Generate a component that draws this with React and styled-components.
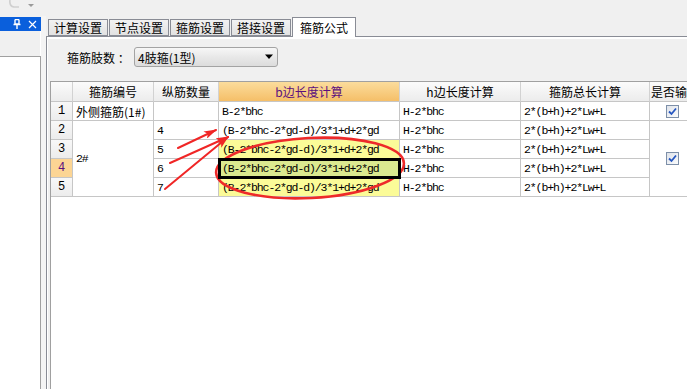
import React from "react"
import styled, { createGlobalStyle } from "styled-components"

const GlobalStyle = createGlobalStyle`
  html, body {
    margin: 0;
    padding: 0;
  }
  body {
    width: 687px;
    height: 389px;
    overflow: hidden;
    background: #f0f0f0;
    font-family: "Noto Sans CJK SC", "Liberation Sans", sans-serif;
    font-size: 12px;
    color: #000;
  }
`

const Screen = styled.div`
  position: relative;
  width: 687px;
  height: 389px;
  display: flex;
  flex-direction: column;
  overflow: hidden;
`

const TopBar = styled.div`
  height: 16px;
  display: flex;
  align-items: flex-start;
  padding-left: 4px;
`

const Body = styled.div`
  flex: 1;
  display: flex;
  min-height: 0;
`

const Dock = styled.div`
  width: 41px;
  display: flex;
  flex-direction: column;
  margin-top: 1px;
`

const DockTitle = styled.div`
  height: 14px;
  background: #0a5fdc;
  display: flex;
  align-items: center;
  justify-content: flex-end;
  gap: 7px;
  padding-right: 4px;
`

const DockTools = styled.div`
  height: 25px;
  border-right: 1px solid #fff;
`

const DockList = styled.div`
  flex: 1;
  background: #fff;
  border-top: 1px solid #a0a0a0;
  border-right: 1px solid #a0a0a0;
  width: 40px;
`

const Splitter = styled.div`
  width: 5px;
  background: #f4f4f4;
`

const Main = styled.div`
  flex: 1;
  display: flex;
  flex-direction: column;
  min-width: 0;
`

const TabStrip = styled.div`
  height: 20px;
  display: flex;
  align-items: flex-end;
  padding-left: 2px;
  border-bottom: 1px solid #898c95;
`

const Tab = styled.div`
  height: ${p => (p.$active ? "20px" : "17px")};
  margin-bottom: ${p => (p.$active ? "-1px" : "0")};
  padding: 0 ${p => (p.$active ? "7px" : "5px")};
  margin-right: ${p => (p.$active ? "0" : "1px")};
  box-sizing: border-box;
  display: flex;
  align-items: center;
  border: 1px solid #898c95;
  border-bottom: ${p => (p.$active ? "none" : "1px solid #898c95")};
  background: ${p => (p.$active ? "#fff" : "linear-gradient(#f2f2f2, #e2e2e2)")};
  line-height: 1;
  white-space: nowrap;
`

const Panel = styled.div`
  flex: 1;
  display: flex;
  flex-direction: column;
  border-left: 1px solid #898c95;
  box-shadow: inset 1px 2px 0 #fff;
  padding: 10px 0 0 3px;
  min-height: 0;
`

const FieldRow = styled.div`
  height: 20px;
  display: flex;
  align-items: center;
  padding-left: 17px;
  margin-bottom: 14px;
`

const Label = styled.span`
  width: 67px;
  white-space: nowrap;
`

const Combo = styled.div`
  width: 144px;
  height: 20px;
  box-sizing: border-box;
  border: 1px solid #a3a3a3;
  border-radius: 3px;
  background: linear-gradient(#f7f7f7, #e8e8e8 50%, #dcdcdc);
  display: flex;
  align-items: center;
  justify-content: space-between;
  padding: 0 3px 0 3px;
`

const GridWrap = styled.div`
  flex: 1;
  background: #fff;
  border-left: 1px solid #a0a0a0;
  border-top: 1px solid #a0a0a0;
  overflow: hidden;
`

const Grid = styled.div`
  display: grid;
  grid-template-columns: 22px 81px 65px 181px 121px 129px 46px;
  grid-template-rows: 20px repeat(5, 19px);
`

const Cell = styled.div`
  box-sizing: border-box;
  border-right: 1px solid #c6c6c6;
  border-bottom: 1px solid #c6c6c6;
  display: flex;
  align-items: center;
  padding-left: 3px;
  white-space: nowrap;
  overflow: visible;
  grid-row: ${p => (p.$span ? `span ${p.$span}` : "auto")};
  background: ${p => (p.$sel ? "#dbe98f" : p.$hl ? "#fbfb98" : "#fff")};
  outline: ${p => (p.$sel ? "3px solid #000" : "none")};
  outline-offset: -2px;
  position: ${p => (p.$sel ? "relative" : "static")};
  z-index: ${p => (p.$sel ? 1 : 0)};
`

const Mono = styled.span`
  font-family: "Liberation Mono", monospace;
  font-size: 11.5px;
  letter-spacing: -1.1px;
`

const HeadCell = styled.div`
  box-sizing: border-box;
  border-right: 1px solid #d2d2d2;
  border-bottom: 1px solid #c6c6c6;
  display: flex;
  align-items: center;
  justify-content: ${p => (p.$left ? "flex-start" : "center")};
  padding-left: ${p => (p.$left ? "1px" : "0")};
  white-space: nowrap;
  background: ${p => (p.$active ? "linear-gradient(#fbdc9c, #f5bf68)" : "linear-gradient(#fbfbfb, #ececec)")};
  color: ${p => (p.$active ? "#5b0f7e" : "#000")};
`

const RowNum = styled.div`
  box-sizing: border-box;
  border-right: 1px solid #c6c6c6;
  border-bottom: 1px solid #c6c6c6;
  display: flex;
  align-items: center;
  justify-content: center;
  font-family: "Liberation Mono", monospace;
  font-size: 12px;
  background: ${p => (p.$active ? "#fcd594" : "linear-gradient(#f8f8f8, #ececec)")};
  color: ${p => (p.$active ? "#5b0f7e" : "#000")};
`

const CheckCell = styled(Cell)`
  justify-content: center;
  padding-left: 0;
`

const Box = styled.div`
  width: 13px;
  height: 13px;
  box-sizing: border-box;
  border: 1px solid #7d8fa8;
  background: linear-gradient(135deg, #dfe3ea, #fafbfc);
  display: flex;
  align-items: center;
  justify-content: center;
`

const Overlay = styled.svg`
  position: absolute;
  left: 0;
  top: 0;
  pointer-events: none;
`

function CheckBox() {
  return (
    <Box>
      <svg width="9" height="9" viewBox="0 0 9 9">
        <path d="M1 4.5 L3.5 7 L8 1.5" stroke="#2556c0" strokeWidth="1.8" fill="none" />
      </svg>
    </Box>
  )
}

const formula = "(B-2*bhc-2*gd-d)/3*1+d+2*gd"
const total = "2*(b+h)+2*Lw+L"
const tabs = ["计算设置", "节点设置", "箍筋设置", "搭接设置", "箍筋公式"]
const heads = ["箍筋编号", "纵筋数量", "b边长度计算", "h边长度计算", "箍筋总长计算"]
const subRows = [
  { n: 2, count: "4" },
  { n: 3, count: "5", hl: true },
  { n: 4, count: "6", hl: true, sel: true },
  { n: 5, count: "7", hl: true },
]

export default function App() {
  return (
    <Screen>
      <GlobalStyle />
      <TopBar>
        <svg width="32" height="12" viewBox="0 0 32 12">
          <path d="M6 0 Q5 6 10 7 L15 7" stroke="#cfcfcf" strokeWidth="1.6" fill="none" />
          <path d="M24 4 L30 4 L27 7 z" fill="#9a9a9a" />
        </svg>
      </TopBar>
      <Body>
        <Dock>
          <DockTitle>
            <svg width="8" height="10" viewBox="0 0 8 10">
              <path d="M2 0.5 H6 M2 0.5 V5 H6 V0.5 M0.5 5.5 H7.5 M4 5.5 V10" stroke="#fff" strokeWidth="1.4" fill="none" />
            </svg>
            <svg width="9" height="9" viewBox="0 0 9 9">
              <path d="M1 1 L8 8 M8 1 L1 8" stroke="#fff" strokeWidth="1.2" />
            </svg>
          </DockTitle>
          <DockTools />
          <DockList />
        </Dock>
        <Splitter />
        <Main>
          <TabStrip>
            {tabs.map((t, i) => (
              <Tab key={t} $active={i === tabs.length - 1}>{t}</Tab>
            ))}
          </TabStrip>
          <Panel>
            <FieldRow>
              <Label>箍筋肢数 ：</Label>
              <Combo>
                <span>4肢箍(1型)</span>
                <svg width="10" height="6" viewBox="0 0 10 6">
                  <path d="M1 0.5 L9 0.5 L5 5 z" fill="#000" />
                </svg>
              </Combo>
            </FieldRow>
            <GridWrap>
              <Grid>
                <HeadCell />
                {heads.map((h, i) => (
                  <HeadCell key={h} $active={i === 2}>{h}</HeadCell>
                ))}
                <HeadCell $left>是否输出</HeadCell>

                <RowNum>1</RowNum>
                <Cell>外侧箍筋(1#)</Cell>
                <Cell />
                <Cell><Mono>B-2*bhc</Mono></Cell>
                <Cell><Mono>H-2*bhc</Mono></Cell>
                <Cell><Mono>{total}</Mono></Cell>
                <CheckCell><CheckBox /></CheckCell>

                {subRows.map((r, i) => (
                  <React.Fragment key={r.n}>
                    <RowNum $active={r.sel}>{r.n}</RowNum>
                    {i === 0 && <Cell $span={4}><Mono>2#</Mono></Cell>}
                    <Cell><Mono>{r.count}</Mono></Cell>
                    <Cell $hl={r.hl} $sel={r.sel}><Mono>{formula}</Mono></Cell>
                    <Cell><Mono>H-2*bhc</Mono></Cell>
                    <Cell><Mono>{total}</Mono></Cell>
                    {i === 0 && <CheckCell $span={4}><CheckBox /></CheckCell>}
                  </React.Fragment>
                ))}
              </Grid>
            </GridWrap>
          </Panel>
        </Main>
      </Body>
      <Overlay width="687" height="389" viewBox="0 0 687 389">
        <defs>
          <marker id="head" markerWidth="13" markerHeight="8" refX="12" refY="4" orient="auto" markerUnits="userSpaceOnUse">
            <path d="M0 0 L13 4 L0 8 L3 4 z" fill="#f02626" />
          </marker>
        </defs>
        <g stroke="#f02626" strokeWidth="2" fill="none" strokeLinecap="round">
          <line x1="178" y1="148" x2="216" y2="130" markerEnd="url(#head)" />
          <line x1="170" y1="163" x2="228" y2="137" markerEnd="url(#head)" />
          <line x1="165" y1="189" x2="228" y2="137" markerEnd="url(#head)" />
        </g>
        <ellipse cx="310" cy="168" rx="94" ry="30" transform="rotate(-3 310 168)" stroke="#ee2a2a" strokeWidth="2.6" fill="none" />
      </Overlay>
    </Screen>
  )
}
